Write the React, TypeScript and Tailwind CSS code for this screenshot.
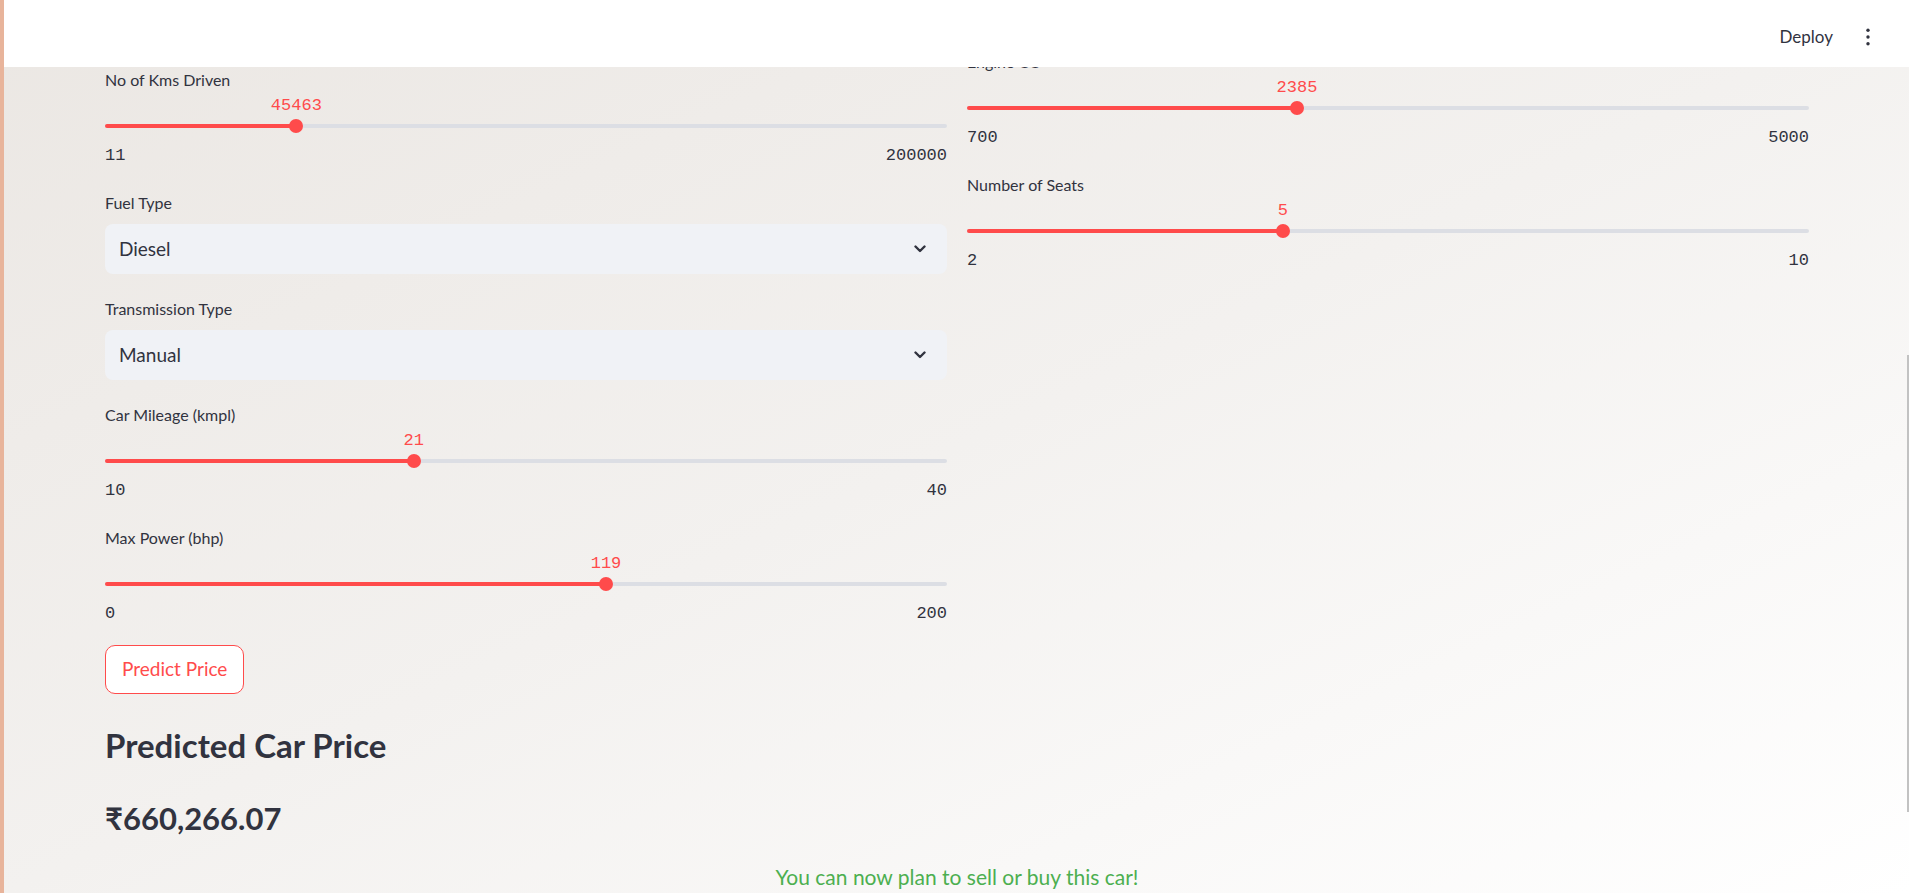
type SliderField = {
  label: string;
  min: number;
  max: number;
  value: number;
};

type SelectField = {
  label: string;
  value: string;
};

const LEFT_TOP: SliderField = { label: "No of Kms Driven", min: 11, max: 200000, value: 45463 };

const LEFT_SELECTS: SelectField[] = [
  { label: "Fuel Type", value: "Diesel" },
  { label: "Transmission Type", value: "Manual" },
];

const LEFT_SLIDERS: SliderField[] = [
  { label: "Car Mileage (kmpl)", min: 10, max: 40, value: 21 },
  { label: "Max Power (bhp)", min: 0, max: 200, value: 119 },
];

const RIGHT_SLIDERS: SliderField[] = [
  { label: "Engine CC", min: 700, max: 5000, value: 2385 },
  { label: "Number of Seats", min: 2, max: 10, value: 5 },
];

const Slider = ({ field }: { field: SliderField }) => {
  const pct = ((field.value - field.min) / (field.max - field.min)) * 100;
  return (
    <div className="flex flex-col">
      <div className="h-6 text-[16px] leading-6 text-[#31333f]">{field.label}</div>
      <div className="relative h-[52px]">
        <div
          className="absolute top-0 -translate-x-1/2 font-['Liberation_Mono',monospace] text-[17px] leading-[28px] text-[#ff4b4b]"
          style={{ left: `${pct}%` }}
        >
          {field.value}
        </div>
        <div className="absolute top-[32px] left-0 right-0 h-1 rounded-full bg-[#dcdee4]" />
        <div
          className="absolute top-[32px] left-0 h-1 rounded-full bg-[#ff4b4b]"
          style={{ width: `${pct}%` }}
        />
        <div
          className="absolute top-[27px] h-[14px] w-[14px] -translate-x-1/2 rounded-full bg-[#ff4b4b]"
          style={{ left: `${pct}%` }}
        />
      </div>
      <div className="flex h-6 justify-between font-['Liberation_Mono',monospace] text-[17px] leading-6 text-[#31333f]">
        <span>{field.min}</span>
        <span>{field.max}</span>
      </div>
    </div>
  );
};

const Select = ({ field }: { field: SelectField }) => (
  <div className="flex flex-col">
    <div className="h-6 text-[16px] leading-6 text-[#31333f]">{field.label}</div>
    <div className="mt-[9px] flex h-[50px] items-center justify-between rounded-lg bg-[#f0f2f6] pl-[14px] pr-[21px] text-[19px] text-[#31333f]">
      <span>{field.value}</span>
      <svg viewBox="0 0 12 8" className="h-[8px] w-[12px]" fill="none" aria-hidden>
        <path d="M1.5 1.5L6 6l4.5-4.5" stroke="#31333f" strokeWidth="2.4" strokeLinecap="round" strokeLinejoin="round" />
      </svg>
    </div>
  </div>
);

export default function App() {
  return (
    <div className="flex h-[893px] w-full overflow-hidden font-[Lato,sans-serif]">
      {/* sidebar edge */}
      <div className="w-1 shrink-0 bg-[#e8b49b]" />

      <main className="relative flex-1 bg-linear-to-br from-[#ebe7e3] via-[#f3f1ef] to-white">
        <header className="absolute inset-x-0 top-0 z-10 flex h-[67px] items-start justify-end gap-[33px] bg-white pr-[39px] pt-[24px]">
          <span className="text-[17px] leading-[26px] text-[#31333f]">Deploy</span>
          <svg viewBox="0 0 4 20" className="mt-[4px] h-[18px] w-[4px]" fill="#31333f" aria-hidden>
            <circle cx="2" cy="2.5" r="1.9" />
            <circle cx="2" cy="10" r="1.9" />
            <circle cx="2" cy="17.5" r="1.9" />
          </svg>
        </header>

        <div className="absolute right-0 top-[355px] h-[457px] w-[2px] bg-[#c2c2c2]" />

        <div className="ml-[101px] w-[1704px]">
          <div className="flex items-start gap-5">
            {/* left column */}
            <div className="flex flex-1 flex-col gap-[23px] pt-[68px]">
              <Slider field={LEFT_TOP} />
              {LEFT_SELECTS.map((s) => (
                <Select key={s.label} field={s} />
              ))}
              {LEFT_SLIDERS.map((s) => (
                <Slider key={s.label} field={s} />
              ))}
            </div>

            {/* right column */}
            <div className="flex flex-1 flex-col gap-[23px] pt-[50px]">
              {RIGHT_SLIDERS.map((s) => (
                <Slider key={s.label} field={s} />
              ))}
            </div>
          </div>

          <button className="mt-[19px] h-[49px] rounded-[10px] border border-[#ff4b4b] bg-white px-[16px] text-[19px] text-[#ff4b4b]">
            Predict Price
          </button>

          <h3 className="mt-[31px] text-[33px] font-bold leading-[40px] text-[#31333f]">
            Predicted Car Price
          </h3>

          <p className="mt-[33px] font-['Lato','Noto_Sans',sans-serif] text-[31px] font-bold leading-[40px] text-[#31333f]">
            ₹660,266.07
          </p>

          <p className="mt-[25px] text-center text-[21px] leading-[28px] text-[#4caf50]">
            You can now plan to sell or buy this car!
          </p>
        </div>
      </main>
    </div>
  );
}
